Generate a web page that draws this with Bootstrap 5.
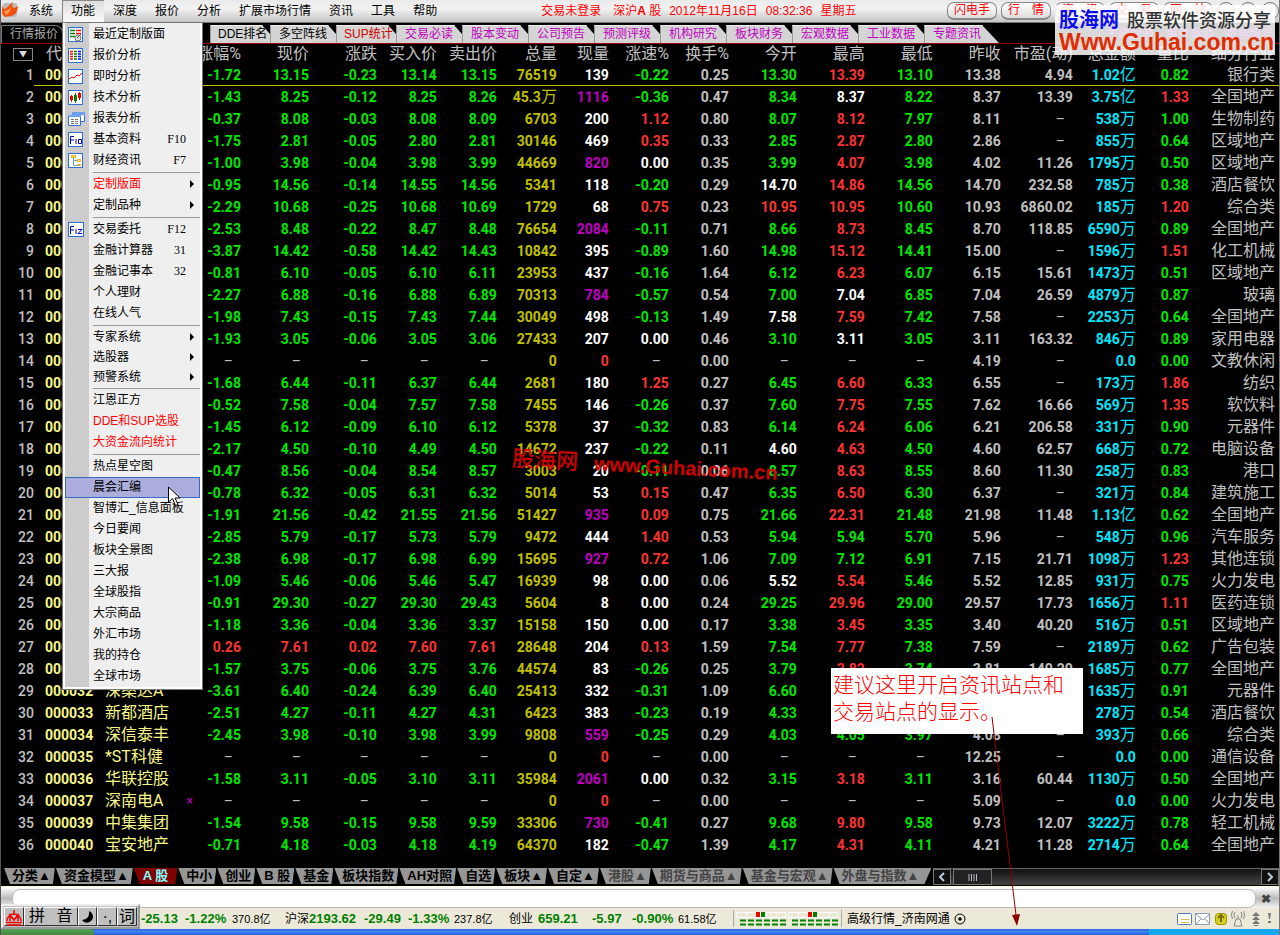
<!DOCTYPE html>
<html lang="zh-CN">
<head>
<meta charset="utf-8">
<meta name="viewport" content="width=device-width, initial-scale=1">
<title>行情报价</title>
<link href="https://cdn.jsdelivr.net/npm/bootstrap@5.3.0/dist/css/bootstrap.min.css" rel="stylesheet">
<style>
  body { background:#000; color:#000; font:12px/20px "Liberation Sans","Noto Sans CJK SC",sans-serif; overflow-x:hidden; }
  button, input { font:inherit; }
  .app-frame { border-left:1px solid #555; border-right:1px solid #777; }

  /* top menu bar */
  .menu-bar { height:23px; background:linear-gradient(#eaeaea,#f2f2f2 40%,#c4c4c4); border-bottom:1px solid #777; }
  .menu-bar .nav-link { color:#000; padding:0 9px; line-height:22px; border:0; background:none; }
  .menu-bar .nav-link.show { background:linear-gradient(#dcdcdc,#fafafa); box-shadow:inset 1px 1px 0 #888; }
  .session-text { color:#f00; padding-left:95px; line-height:22px; }
  .pill-btn { width:50px; height:18px; padding:0; line-height:15px; font-size:12px; color:#f00; border:1px solid #888; border-bottom-width:2px; border-radius:7px; background:linear-gradient(#fff,#ddd); white-space:pre; }
  .win-btn { width:18px; height:18px; padding:0; line-height:14px; border:1px solid #777; border-radius:50%; background:#eee; color:#888; }

  /* drop-down */
  .func-menu { --bs-dropdown-min-width:141px; width:141px; margin:0!important; padding:1px 2px 2px 2px; border:1px solid #777; border-radius:0; font-size:12px; line-height:21px;
    background:linear-gradient(90deg,#fff 2px,#ccc 2px,#ccc 26px,#efefef 26px); box-shadow:inset -1px -1px 0 1px #fff; top:22px; left:0; color:#000; }
  .func-menu .dropdown-item { height:21px; padding:0 6px 0 28px; color:#000; line-height:21px; position:relative; display:flex; }
  .func-menu .dropdown-item.tight { height:20px; }
  .func-menu .hot { color:#f00; }
  .func-menu .dropdown-item.picked { background:#adaddd; box-shadow:inset 0 0 0 1px #316ac5; }
  .func-menu .dropdown-item svg { position:absolute; left:3px; top:3px; }
  .func-menu kbd { background:none; color:#000; padding:0 8px 0 0; font:12px/21px "Liberation Serif",serif; margin-left:auto; }
  .func-menu .more::after { content:""; margin:6px 0 0 auto; border:4px solid transparent; border-left-color:#000; border-right:0; height:0; }
  .func-menu .dropdown-divider { margin:1px 0 1px 28px; border-top:1px solid #999; opacity:1; }

  /* upper tabs */
  .top-tabs { height:21px; background:#000; border-bottom:1px solid #a00000; padding-top:2px; }
  .top-tabs a { display:block; width:66px; padding-left:8px; height:18px; line-height:17px; color:#c000c0; background:#d4d4d4; text-decoration:none; white-space:nowrap;
    border-left:1px solid #999; border-top:1px solid #eee; clip-path:polygon(0 0,58px 0,100% 9px,100% 100%,0 100%); }
  .top-tabs a.narrow { width:60px; padding-left:7px; clip-path:polygon(0 0,52px 0,100% 9px,100% 100%,0 100%); }
  .top-tabs a.last-tab { width:75px; margin-right:32px; clip-path:polygon(0 0,58px 0,100% 100%,0 100%); }
  .top-tabs a.first-tab { width:62px; background:#000; color:#aaa; border:1px solid #777; border-bottom:0; clip-path:none; border-radius:0 8px 0 0; }
  .top-tabs a.ink { color:#000; } .top-tabs a.alert-ink { color:#c00; }
  .top-tabs .hidden-run { width:147px; }
  .top-tabs a.plain { background:none; border-color:#000; width:60px; padding-left:6px; }

  /* quotation table */
  .quotes { width:100%; table-layout:fixed; border-collapse:separate; border-spacing:0; color:#c0c0c0; background:#000; margin-bottom:12px; }
  .quotes th { height:20px; font:400 16px/20px Roboto,"Noto Sans CJK SC",sans-serif; padding:0; text-align:right; white-space:nowrap; }
  .quotes td { height:22px; font:700 14px/22px Roboto,"Noto Sans CJK SC",sans-serif; padding:0; text-align:right; white-space:nowrap; }
  .quotes .code { text-align:left; padding-left:11px; color:#f8f888; }
  .quotes .stock { text-align:left; font-size:16px; font-weight:400; color:#f8f888; }
  .quotes .sector { font-size:16px; font-weight:400; padding-right:4px; }
  .quotes .unit { font-size:16px; font-weight:400; }
  .quotes .none { padding-right:8px; color:#c0c0c0; font-weight:400; }
  .quotes .seq { font-weight:500; }
  .quotes .picked td:not(.seq) { box-shadow:inset 0 -1px 0 #c0c000; }
  .quotes .c-up { color:#ff3232; } .quotes .c-down { color:#00e800; } .quotes .c-flat { color:#fff; }
  .quotes .c-big { color:#c000c0; } .quotes .c-vol { color:#c0c000; } .quotes .c-amt { color:#00e8ff; }
  .quotes .flag { color:#c000c0; font-size:12px; margin-right:2px; }
  .sort-btn { width:20px; height:13px; padding:0; border:1px solid #888; background:#000; color:#ddd; font-size:8px; line-height:9px; display:block; margin-left:12px; }

  /* lower tabs */
  .market-tabs { height:18px; background:#000; padding-left:2px; }
  .market-tabs a { padding:0 4px 0 9px; height:16px; font:700 13px/16px "Liberation Sans","Noto Sans CJK SC",sans-serif; color:#000; background:#969696; text-decoration:none; white-space:nowrap; clip-path:polygon(1px 0,100% 0,calc(100% - 2px) 100%,7px 100%); }
  .market-tabs a.on { background:#800000; color:#80ffff; padding:0 9px 0 10px; }
  .market-tabs a.dim { color:#444; }
  .market-tabs a.end { padding-right:12px; clip-path:polygon(1px 0,100% 0,calc(100% - 7px) 100%,7px 100%); }
  .h-scroll { background:linear-gradient(#111,#444); border-top:1px solid #666; height:17px; margin-left:2px; }
  .h-scroll button { width:18px; padding:0; border:1px solid #777; background:#111; color:#ccc; display:flex; align-items:center; justify-content:center; }
  .h-scroll .thumb { width:39px; margin-left:2px; background:#222; }

  /* entry line and status */
  .entry-row { height:22px; background:linear-gradient(#fff,#bbb 55%,#f4f4f4); border-top:1px solid #ffffe0; padding:2px 3px 0 11px; }
  .entry-row input { border:1px solid #bbb; border-radius:8px; height:19px; background:#fff; outline:0; min-width:0; }
  .entry-row button { border:0; background:none; padding:0; width:20px; color:#444; font-weight:700; line-height:16px; }
  .status-row { height:21px; background:#ece9d8; padding-left:140px; font-size:11px; line-height:22px; white-space:nowrap; }
  .figures { display:grid; grid-template-columns:44px 47px 53px 79px 44px 46px 55px 29px 54px 40px 46px 55px; }
  .figures b { color:#008000; font-size:13px; }
  .figures .cn, .site { font-size:12px; }
  .task-strip { height:6px; background:linear-gradient(#2a62d8,#3f86f0 40%,#245edb); }
  .task-start { width:93px; background:linear-gradient(#5a9e5a,#3c8b3c); border-radius:0 4px 0 0; }
  .task-tray { width:130px; background:#18a8f0; }

  /* floating pieces */
  .ime-bar { position:absolute; left:0; bottom:6px; width:139px; height:25px; background:#c0c0c0; border:2px outset #eee; padding:1px; }
  .ime-bar button { padding:0; border:1px solid; border-color:#fff #333 #333 #fff; background:#c0c0c0; font-size:16px; line-height:16px; color:#000; width:20px; }
  .ime-bar .wide { width:54px; }
  .brand-box { position:absolute; right:4px; top:5px; width:220px; height:50px; padding:2px 4px; background:rgba(255,255,255,.85); z-index:5; white-space:nowrap; }
  .brand-name { font:700 20px/24px "Noto Sans CJK SC",sans-serif; color:#0c0cf0; }
  .brand-sub { font:500 18px/24px "Noto Sans CJK SC",sans-serif; color:#333; }
  .brand-url { font:700 23px/22px "Liberation Sans",sans-serif; color:#e02c00; }
  .center-mark { position:absolute; left:511px; top:451px; color:#e00000; opacity:.92; transform:rotate(3deg); font:700 20px/24px "Liberation Sans",sans-serif; white-space:nowrap; }
  .center-mark .han { font:500 22px/24px "Noto Sans CJK SC",sans-serif; }
  .note-box { position:absolute; left:830px; top:668px; width:252px; height:66px; padding:2px; background:#fff; color:#f00; font:300 21px/27px "Noto Sans CJK SC",sans-serif; }
  .note-arrow { position:absolute; left:984px; top:715px; pointer-events:none; }
  .mouse-arrow { position:absolute; left:167px; top:486px; z-index:1100; }
</style>
</head>
<body>
<div class="app-frame position-relative">
  <header class="menu-bar d-flex">
    <svg width="19" height="20" viewBox="0 0 19 20" aria-hidden="true"><rect x="2" y="3" width="14" height="14" rx="2" fill="#bbb"/><path d="M1 5Q2 9 4 9L12 2q-2 5 1 6l4-2q0 8-7 10l-6 1q-4-3-3-6z" fill="#f05010"/><path d="M3 11q4 0 7-4-1 6-5 8z" fill="#ff9a50"/></svg>
    <nav class="d-flex">
      <a class="nav-link" href="#">系统</a>
      <div class="dropdown">
        <a class="nav-link show" href="#" role="button" aria-expanded="true">功能</a>
        <div class="dropdown-menu func-menu show">
          <a class="dropdown-item" href="#"><svg width="16" height="16"><rect x=".5" y=".5" width="14" height="14" fill="#fff" stroke="#2f6fd8"/><path d="M2 3.500h5M2 6.500h5M2 9.500h5" stroke="#008000" stroke-width="1.500"/><path d="M8 3.500h5M8 6.500h5" stroke="#f00" stroke-width="1.500"/><circle cx="10" cy="11" r="3" fill="#ddd" stroke="#777"/><path d="M9 11l4-4" stroke="#555"/></svg>最近定制版面</a>
          <a class="dropdown-item" href="#"><svg width="16" height="16"><rect x=".5" y=".5" width="14" height="14" fill="#fff" stroke="#2f6fd8"/><path d="M2 3.500h3M2 6h3M2 8.500h3M2 11h3" stroke="#f00" stroke-width="1.500"/><path d="M6 3.500h3M6 6h3M6 8.500h3M6 11h3" stroke="#008000" stroke-width="1.500"/><path d="M10 3.500h3M10 6h3M10 8.500h3M10 11h3" stroke="#00f" stroke-width="1.500"/></svg>报价分析</a>
          <a class="dropdown-item" href="#"><svg width="16" height="16"><rect x=".5" y=".5" width="14" height="14" fill="#fff" stroke="#2f6fd8"/><path d="M1 10l3-2 2 1 3-3 2 1 3-3" stroke="#e00" fill="none"/></svg>即时分析</a>
          <a class="dropdown-item" href="#"><svg width="16" height="16"><rect x=".5" y=".5" width="14" height="14" fill="#fff" stroke="#2f6fd8"/><path d="M3.500 5v7M11.500 2v8" stroke="#e00"/><path d="M2 6h3v4H2zM10 3h3v5h-3z" fill="#e00"/><path d="M7.500 3v10" stroke="#008000"/><path d="M6 5h3v6H6z" fill="#008000"/></svg>技术分析</a>
          <a class="dropdown-item" href="#"><svg width="17" height="16"><path d="M4.500 1.500h12v9h-12z" fill="#fff" stroke="#2f6fd8"/><path d="M4 1h13v3H4z" fill="#6aa2f0"/><path d="M.5 4.500h12v10H.5z" fill="#fff" stroke="#2f6fd8"/><path d="M0 4h13v2H0z" fill="#6aa2f0"/><path d="M3 8.500h8M3 10.500h8M3 12.500h8" stroke="#777" stroke-dasharray="3 1"/></svg>报表分析</a>
          <a class="dropdown-item" href="#"><svg width="16" height="16"><rect x=".5" y=".5" width="14" height="14" fill="#fff" stroke="#2f6fd8"/><path d="M2.500 12V4.500H6M2.500 8H6M8 7v5M10.500 7.500h3v4h-3z" stroke="#00c" fill="none"/></svg>基本资料<kbd>F10</kbd></a>
          <a class="dropdown-item" href="#"><svg width="16" height="16"><rect x=".5" y=".5" width="14" height="14" fill="#fff" stroke="#2f6fd8"/><path d="M5.500 4v8.500H10M5.500 7.500H10" stroke="#69c" fill="none"/><path d="M3.500 2.500h4v2h-4zM9.500 6.500h3v2h-3zM9.500 11.500h3v1h-3z" fill="#fd5" stroke="#e8b020"/></svg>财经资讯<kbd>F7</kbd></a>
          <hr class="dropdown-divider">
          <a class="dropdown-item more hot" href="#">定制版面</a>
          <a class="dropdown-item more" href="#">定制品种</a>
          <hr class="dropdown-divider">
          <a class="dropdown-item" href="#"><svg width="16" height="16"><rect x=".5" y=".5" width="15" height="14" fill="#fff" stroke="#2f6fd8"/><path d="M2.500 12V4.500H6M2.500 8H6M8 7v5M10 7.500h4l-4 4h4" stroke="#00c" fill="none"/></svg>交易委托<kbd>F12</kbd></a>
          <a class="dropdown-item" href="#">金融计算器<kbd>31</kbd></a>
          <a class="dropdown-item" href="#">金融记事本<kbd>32</kbd></a>
          <a class="dropdown-item" href="#">个人理财</a>
          <a class="dropdown-item" href="#">在线人气</a>
          <hr class="dropdown-divider">
          <a class="dropdown-item more tight" href="#">专家系统</a>
          <a class="dropdown-item more tight" href="#">选股器</a>
          <a class="dropdown-item more tight" href="#">预警系统</a>
          <hr class="dropdown-divider">
          <a class="dropdown-item" href="#">江恩正方</a>
          <a class="dropdown-item hot" href="#">DDE和SUP选股</a>
          <a class="dropdown-item hot" href="#">大资金流向统计</a>
          <hr class="dropdown-divider">
          <a class="dropdown-item" href="#">热点星空图</a>
          <a class="dropdown-item picked" href="#">晨会汇编</a>
          <a class="dropdown-item" href="#">智博汇_信息面板</a>
          <a class="dropdown-item" href="#">今日要闻</a>
          <a class="dropdown-item" href="#">板块全景图</a>
          <a class="dropdown-item" href="#">三大报</a>
          <a class="dropdown-item" href="#">全球股指</a>
          <a class="dropdown-item" href="#">大宗商品</a>
          <a class="dropdown-item" href="#">外汇市场</a>
          <a class="dropdown-item" href="#">我的持仓</a>
          <a class="dropdown-item" href="#">全球市场</a>
        </div>
      </div>
      <a class="nav-link" href="#">深度</a>
      <a class="nav-link" href="#">报价</a>
      <a class="nav-link" href="#">分析</a>
      <a class="nav-link" href="#">扩展市场行情</a>
      <a class="nav-link" href="#">资讯</a>
      <a class="nav-link" href="#">工具</a>
      <a class="nav-link" href="#">帮助</a>
    </nav>
    <div class="session-text d-flex text-nowrap"><span class="me-2 pe-1">交易未登录</span><span class="me-2">深沪<b>A</b> 股</span><span class="me-2">2012年11月16日</span><span class="me-2">08:32:36</span><span>星期五</span></div>
    <div class="ms-auto d-flex align-items-center gap-1">
      <button class="pill-btn" type="button">闪电手</button>
      <button class="pill-btn" type="button">行　情</button>
      <button class="pill-btn" type="button">资　讯</button>
      <button class="pill-btn" type="button">交　易</button>
      <button class="pill-btn" type="button">网　站</button>
      <button class="win-btn" type="button" aria-label="最小化">–</button>
      <button class="win-btn" type="button" aria-label="还原">▫</button>
      <button class="win-btn" type="button" aria-label="关闭">×</button>
    </div>
  </header>

  <nav class="top-tabs d-flex">
    <a class="first-tab" href="#">行情报价</a>
    <span class="hidden-run"></span>
    <a class="narrow ink" href="#">DDE排名</a>
    <a class="ink" href="#">多空阵线</a>
    <a class="narrow alert-ink" href="#">SUP统计</a>
    <a href="#">交易必读</a>
    <a href="#">股本变动</a>
    <a href="#">公司预告</a>
    <a href="#">预测评级</a>
    <a href="#">机构研究</a>
    <a href="#">板块财务</a>
    <a href="#">宏观数据</a>
    <a href="#">工业数据</a>
    <a class="last-tab" href="#">专题资讯</a>
    <span class="d-flex ms-auto"><a class="plain" href="#">主题投资</a><a class="plain" href="#">事件驱动</a><a class="plain" href="#">数据纵览</a></span>
  </nav>

  <table class="quotes">
    <colgroup id="cols"></colgroup>
    <thead><tr>
      <th><button class="sort-btn" type="button" aria-label="排序">▼</button></th>
      <th class="text-start ps-2">&nbsp;代码</th><th></th>
      <th>涨幅%</th><th>现价</th><th>涨跌</th><th>买入价</th><th>卖出价</th><th>总量</th><th>现量</th><th>涨速%</th><th>换手%</th><th>今开</th><th>最高</th><th>最低</th><th>昨收</th><th>市盈(动)</th><th>总金额</th><th>量比</th><th class="pe-1">细分行业</th>
    </tr></thead>
    <tbody id="rows"></tbody>
  </table>

  <div class="market-tabs d-flex">
    <nav class="d-flex">
      <a href="#">分类▲</a><a href="#">资金模型▲</a><a class="on" href="#">A 股</a><a href="#">中小</a><a href="#">创业</a><a href="#">B 股</a><a href="#">基金</a><a href="#">板块指数</a><a href="#">AH对照</a><a href="#">自选</a><a href="#">板块▲</a><a href="#">自定▲</a><a class="dim" href="#">港股▲</a><a class="dim" href="#">期货与商品▲</a><a class="dim" href="#">基金与宏观▲</a><a class="dim end" href="#">外盘与指数▲</a>
    </nav>
    <div class="h-scroll d-flex flex-grow-1">
      <button type="button" aria-label="向左"><svg width="8" height="10"><path d="M6 1 2 5l4 4" fill="none" stroke="#bcd" stroke-width="2"/></svg></button>
      <button class="thumb" type="button" aria-label="滚动条"><svg width="9" height="7"><path d="M1 0v7M3.500 0v7M6 0v7M8.500 0v7" stroke="#bbc"/></svg></button>
      <button class="ms-auto" type="button" aria-label="向右"><svg width="8" height="10"><path d="M2 1l4 4-4 4" fill="none" stroke="#bcd" stroke-width="2"/></svg></button>
    </div>
  </div>

  <div class="entry-row d-flex">
    <input class="flex-grow-1" type="text" aria-label="代码输入">
    <button type="button" aria-label="关闭">✖</button>
  </div>

  <footer class="status-row d-flex">
    <div class="figures">
      <b>-25.13</b><b>-1.22%</b><span>370.8亿</span><span class="cn">沪深<b>2193.62</b></span><b>-29.49</b><b>-1.33%</b><span>237.8亿</span><span class="cn">创业</span><b>659.21</b><b>-5.97</b><b>-0.90%</b><span>61.58亿</span>
    </div>
    <svg width="110" height="21" aria-hidden="true">
      <path d="M.5 2v17M108.500 2v17" stroke="#aaa"/>
      <g id="meter"><path d="M3.500 4.500h49v5h-49zM13.500 4v6M23.500 4v6M33.500 4v6M43.500 4v6" fill="none" stroke="#fff"/><path d="M7 12.500h46M7 16.500h46" stroke="#008000" stroke-width="2" stroke-dasharray="6 2"/><path d="M23 4h4v5h-4z" fill="#e00"/><path d="M28 4h4v5h-4z" fill="#008000"/></g>
      <use href="#meter" x="52"/>
    </svg>
    <span class="site ps-1">高级行情_济南网通</span>
    <svg class="ms-1" width="12" height="21"><circle cx="6" cy="11" r="5" fill="none" stroke="#000"/><circle cx="6" cy="11" r="1.800"/></svg>
    <svg class="ms-auto me-1" width="100" height="21" aria-hidden="true">
      <rect x="2.500" y="5.500" width="14" height="11" rx="1" fill="#fff" stroke="#5577bb"/><path d="M6 11.500h8M6 14.500h8" stroke="#e0c040"/>
      <rect x="20.500" y="5.500" width="14" height="11" fill="#fff" stroke="#8899bb"/><path d="M21 6l7 6 7-6M21 16l5-5M35 16l-5-5" fill="none" stroke="#8899bb"/>
      <rect x="40.500" y="5.500" width="11" height="11" rx="3" fill="#d8d020" stroke="#989000"/><path d="M46 14V8M43 10l3-3 3 3" stroke="#776f00" fill="none" stroke-width="2"/>
      <path d="M63 7v4M61 11h4l2 7h-8zM60 4q-2 3 0 6M66 4q2 3 0 6M57.500 3q-2 4 0 8M68.500 3q2 4 0 8" fill="none" stroke="#888"/>
      <path d="M81 4l4 4h-8zM81 8l4 4h-8zM81 12l4 4h-8zM79 17h4v1h-4zM93 5h3l-1 6h-1zM93 13h3v2h-3z" fill="#777"/>
    </svg>
  </footer>
  <div class="task-strip d-flex justify-content-between"><span class="task-start"></span><span class="task-tray"></span></div>

  <div class="ime-bar d-flex">
    <button type="button" aria-label="输入法"><svg width="18" height="18"><path d="M2 13a7 7 0 1 1 14 0M9 2v5M5 13V7l4 5 4-5v6M1 14.500h16M2 17h14" fill="none" stroke="#e00" stroke-width="1.500"/></svg></button>
    <button class="wide d-flex justify-content-between px-1" type="button"><span>拼</span><span>音</span></button>
    <button type="button" aria-label="半角"><svg width="12" height="14"><path d="M8 1a6 6 0 1 1-7 9Q9 9 8 1z"/></svg></button>
    <button type="button">·,</button>
    <button type="button">词</button>
  </div>

  <div class="brand-box">
    <div class="d-flex justify-content-between"><span class="brand-name">股海网</span><span class="brand-sub">股票软件资源分享</span></div>
    <div class="brand-url">Www.Guhai.com.cn</div>
  </div>
  <div class="center-mark"><span class="han me-3">股海网</span>www.Guhai.com.cn</div>
  <div class="note-box">建议这里开启资讯站点和<br>交易站点的显示。</div>
  <svg class="note-arrow" width="40" height="213"><path d="M7 2 31 200" stroke="#900000"/><path d="M27 200l8-1-3 12z" fill="#900000"/></svg>
  <svg class="mouse-arrow" width="13" height="21"><path d="M.5 1v15l4-3.500 3 7 2.500-1-3-6.500h5z" fill="#fff" stroke="#000"/></svg>
</div>

<script>
// code suffix, name, then change%, price, change, bid, ask, volume, last size, speed, turnover, open, high, low, previous close, P/E, amount, volume ratio, sector
const quotes = `
01||-1.72 13.15 -0.23 13.14 13.15 76519 139 -0.22 0.25 13.30 13.39 13.10 13.38 4.94 1.02亿 0.82 银行类
02||-1.43 8.25 -0.12 8.25 8.26 45.3万 1116 -0.36 0.47 8.34 8.37 8.22 8.37 13.39 3.75亿 1.33 全国地产
04||-0.37 8.08 -0.03 8.08 8.09 6703 200 1.12 0.80 8.07 8.12 7.97 8.11 – 538万 1.00 生物制药
05||-1.75 2.81 -0.05 2.80 2.81 30146 469 0.35 0.33 2.85 2.87 2.80 2.86 – 855万 0.64 区域地产
06||-1.00 3.98 -0.04 3.98 3.99 44669 820 0.00 0.35 3.99 4.07 3.98 4.02 11.26 1795万 0.50 区域地产
07||-0.95 14.56 -0.14 14.55 14.56 5341 118 -0.20 0.29 14.70 14.86 14.56 14.70 232.58 785万 0.38 酒店餐饮
08||-2.29 10.68 -0.25 10.68 10.69 1729 68 0.75 0.23 10.95 10.95 10.60 10.93 6860.02 185万 1.20 综合类
09||-2.53 8.48 -0.22 8.47 8.48 76654 2084 -0.11 0.71 8.66 8.73 8.45 8.70 118.85 6590万 0.89 全国地产
10||-3.87 14.42 -0.58 14.42 14.43 10842 395 -0.89 1.60 14.98 15.12 14.41 15.00 – 1596万 1.51 化工机械
11||-0.81 6.10 -0.05 6.10 6.11 23953 437 -0.16 1.64 6.12 6.23 6.07 6.15 15.61 1473万 0.51 区域地产
12||-2.27 6.88 -0.16 6.88 6.89 70313 784 -0.57 0.54 7.00 7.04 6.85 7.04 26.59 4879万 0.87 玻璃
14||-1.98 7.43 -0.15 7.43 7.44 30049 498 -0.13 1.49 7.58 7.59 7.42 7.58 – 2253万 0.64 全国地产
16||-1.93 3.05 -0.06 3.05 3.06 27433 207 0.00 0.46 3.10 3.11 3.05 3.11 163.32 846万 0.89 家用电器
17||– – – – – 0 0 – 0.00 – – – 4.19 – 0.0 0.00 文教休闲
18||-1.68 6.44 -0.11 6.37 6.44 2681 180 1.25 0.27 6.45 6.60 6.33 6.55 – 173万 1.86 纺织
19||-0.52 7.58 -0.04 7.57 7.58 7455 146 -0.26 0.37 7.60 7.75 7.55 7.62 16.66 569万 1.35 软饮料
20||-1.45 6.12 -0.09 6.10 6.12 5378 37 -0.32 0.83 6.14 6.24 6.06 6.21 206.58 331万 0.90 元器件
21||-2.17 4.50 -0.10 4.49 4.50 14672 237 -0.22 0.11 4.60 4.63 4.50 4.60 62.57 668万 0.72 电脑设备
22||-0.47 8.56 -0.04 8.54 8.57 3003 20 -0.11 0.06 8.57 8.63 8.55 8.60 11.30 258万 0.83 港口
23||-0.78 6.32 -0.05 6.31 6.32 5014 53 0.15 0.47 6.35 6.50 6.30 6.37 – 321万 0.84 建筑施工
24||-1.91 21.56 -0.42 21.55 21.56 51427 935 0.09 0.75 21.66 22.31 21.48 21.98 11.48 1.13亿 0.62 全国地产
25||-2.85 5.79 -0.17 5.73 5.79 9472 444 1.40 0.53 5.94 5.94 5.70 5.96 – 548万 0.96 汽车服务
26||-2.38 6.98 -0.17 6.98 6.99 15695 927 0.72 1.06 7.09 7.12 6.91 7.15 21.71 1098万 1.23 其他连锁
27||-1.09 5.46 -0.06 5.46 5.47 16939 98 0.00 0.06 5.52 5.54 5.46 5.52 12.85 931万 0.75 火力发电
28||-0.91 29.30 -0.27 29.30 29.43 5604 8 0.00 0.24 29.25 29.96 29.00 29.57 17.73 1656万 1.11 医药连锁
29||-1.18 3.36 -0.04 3.36 3.37 15158 150 0.00 0.17 3.38 3.45 3.35 3.40 40.20 516万 0.51 区域地产
30||0.26 7.61 0.02 7.60 7.61 28648 204 0.13 1.59 7.54 7.77 7.38 7.59 – 2189万 0.62 广告包装
31||-1.57 3.75 -0.06 3.75 3.76 44574 83 -0.26 0.25 3.79 3.82 3.74 3.81 140.20 1685万 0.77 全国地产
32|深桑达A|-3.61 6.40 -0.24 6.39 6.40 25413 332 -0.31 1.09 6.60 6.65 6.36 6.64 – 1635万 0.91 元器件
33|新都酒店|-2.51 4.27 -0.11 4.27 4.31 6423 383 -0.23 0.19 4.33 4.39 4.25 4.38 – 278万 0.54 酒店餐饮
34|深信泰丰|-2.45 3.98 -0.10 3.98 3.99 9808 559 -0.25 0.29 4.03 4.05 3.97 4.08 – 393万 0.66 综合类
35|*ST科健|– – – – – 0 0 – 0.00 – – – 12.25 – 0.0 0.00 通信设备
36|华联控股|-1.58 3.11 -0.05 3.10 3.11 35984 2061 0.00 0.32 3.15 3.18 3.11 3.16 60.44 1130万 0.50 全国地产
37|深南电A|– – – – – 0 0 – 0.00 – – – 5.09 – 0.0 0.00 火力发电
39|中集集团|-1.54 9.58 -0.15 9.58 9.59 33306 730 -0.41 0.27 9.68 9.80 9.58 9.73 12.07 3222万 0.78 轻工机械
40|宝安地产|-0.71 4.18 -0.03 4.18 4.19 64370 182 -0.47 1.39 4.17 4.31 4.11 4.21 11.28 2714万 0.64 全国地产`.trim().split('\n');

const widths = [33,71,90,46,68,68,60,60,60,52,60,60,68,68,68,68,72,63,53,90];
document.getElementById('cols').innerHTML = widths.map(w => `<col style="width:${w / 1278 * 100}%">`).join('');

const bySign = (v, ref) => v > ref ? 'c-up' : v < ref ? 'c-down' : 'c-flat';
function tone(i, v, prev) {
  if (v === '–') return 'none';
  const n = parseFloat(v);
  if ([0, 2, 7].includes(i)) return bySign(n, 0);
  if ([1, 3, 4, 9, 10, 11].includes(i)) return bySign(n, prev);
  if (i === 5) return 'c-vol';
  if (i === 6) return n === 0 ? 'c-up' : n >= 500 ? 'c-big' : 'c-flat';
  if (i === 14) return 'c-amt';
  if (i === 15) return n > 1 ? 'c-up' : 'c-down';
  return i === 16 ? 'sector' : '';
}
document.getElementById('rows').innerHTML = quotes.map((line, k) => {
  const [code, name, rest] = line.split('|');
  const f = rest.split(' ');
  const flag = code === '37' ? '<span class="flag float-end">×</span>' : '';
  const cells = f.map((v, i) => `<td class="${tone(i, v, parseFloat(f[12]))}">${v.replace(/[万亿]/, '<span class="unit">$&</span>')}</td>`).join('');
  return `<tr${k ? '' : ' class="picked"'}><td class="seq">${k + 1}</td><td class="code">0000${code}</td><td class="stock">${flag}${name}</td>${cells}</tr>`;
}).join('');
</script>
<script src="https://cdn.jsdelivr.net/npm/bootstrap@5.3.0/dist/js/bootstrap.bundle.min.js"></script>
</body>
</html>
